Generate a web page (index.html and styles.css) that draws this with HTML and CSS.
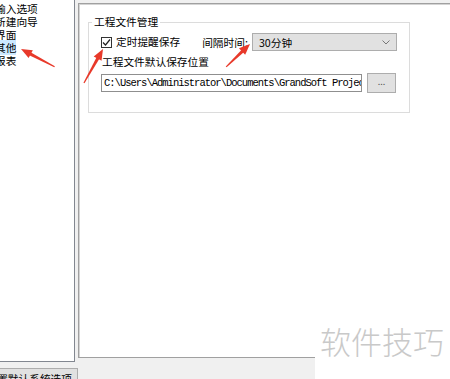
FILE: index.html
```html
<!DOCTYPE html>
<html>

  <head>

    <meta charset="utf-8">

    <title> 选项 </title>

    <link rel="stylesheet" href="styles.css">

  </head>

  <body>
    <!-- Ventana de opciones -->
    <div class="dialog">
      <div class="main">
        <!-- Árbol de categorías -->
        <ul class="tree">
          <li>输入选项</li>
          <li>新建向导</li>
          <li>界面</li>
          <li><span class="selected">其他</span></li>
          <li>报表</li>
        </ul>

        <!-- Página de la categoría "其他" -->
        <div class="page">
          <fieldset class="group">
            <legend>工程文件管理</legend>
            <div class="row">
              <label class="check">
                <span class="box">
                  <svg width="9" height="9" viewBox="0 0 9 9"><polyline points="1,4.5 3.5,7 8,1.5" fill="none" stroke="#222" stroke-width="1.2"/></svg>
                </span>
                定时提醒保存
              </label>
              <span class="interval">间隔时间:</span>
              <div class="combo">
                <span>30分钟</span>
                <svg width="8" height="5" viewBox="0 0 8 5"><polyline points="0.5,0.5 4,4 7.5,0.5" fill="none" stroke="#777" stroke-width="1"/></svg>
              </div>
            </div>
            <div class="caption">工程文件默认保存位置</div>
            <div class="row">
              <div class="path">C:\Users\Administrator\Documents\GrandSoft Projects</div>
              <div class="browse">...</div>
            </div>
          </fieldset>
        </div>
      </div>

      <div class="footer">
        <div class="reset">设置默认系统选项</div>
      </div>
    </div>

    <div class="watermark">软件技巧</div>

    <!-- Flechas rojas de la captura -->
    <svg class="arrows" width="450" height="379">
      <g fill="#e8392a">
        <g transform="translate(21,49) rotate(207.9)">
          <polygon points="-38,-0.6 -9,-1.6 -9,1.6 -38,0.6"/>
          <polygon points="0,0 -11,-4.5 -11,4.5"/>
        </g>
        <g transform="translate(103,49) rotate(-60.8)">
          <polygon points="-39,-0.6 -9,-1.6 -9,1.6 -39,0.6"/>
          <polygon points="0,0 -11,-4.5 -11,4.5"/>
        </g>
        <g transform="translate(250,44) rotate(-43.8)">
          <polygon points="-33,-0.6 -9,-1.6 -9,1.6 -33,0.6"/>
          <polygon points="0,0 -11,-4.5 -11,4.5"/>
        </g>
      </g>
    </svg>

  </body>

</html>
```

FILE: styles.css
```css
body {
  margin: 0;
  width: 450px;
  height: 379px;
  overflow: hidden;
  position: relative;
  background: #f0f0f0;
  font-family: "Noto Sans CJK SC", "Noto Sans", sans-serif;
  font-size: 10.7px;
  color: #000;
}

.main {
  display: flex;
  height: 362px;
}

.tree {
  box-sizing: border-box;
  width: 75px;
  height: 362px;
  margin: 0;
  padding: 2px 0 0 0;
  list-style: none;
  background: #fff;
  border-right: 1px solid #828790;
  border-bottom: 1px solid #828790;
  overflow: hidden;
}

.tree li {
  margin-left: -5px;
  height: 13px;
  line-height: 13px;
  white-space: nowrap;
}

.selected {
  background: #cce8ff;
}

.page {
  flex: 1;
  box-sizing: border-box;
  height: 355px;
  margin: 3px 0 0 3px;
  background: #fff;
  border: 1px solid #a0a0a0;
  border-right: none;
  box-shadow: inset 1px 1px 0 #d4d4d4;
}

.group {
  box-sizing: border-box;
  width: 322px;
  height: 98px;
  margin: 11px 0 0 9px;
  padding: 4px 12px 0 12px;
  border: 1px solid #dcdcdc;
}

.group legend {
  margin-left: -9px;
  padding: 0 2px;
  line-height: 14px;
}

.row {
  display: flex;
  align-items: center;
}

.check {
  display: flex;
  align-items: center;
  gap: 4px;
  line-height: 18px;
}

.box {
  box-sizing: border-box;
  width: 11px;
  height: 11px;
  border: 1px solid #333;
  display: flex;
  align-items: center;
  justify-content: center;
}

.interval {
  margin-left: 22px;
}

.combo {
  box-sizing: border-box;
  width: 145px;
  height: 18px;
  margin-left: 4px;
  padding: 0 6px;
  display: flex;
  align-items: center;
  justify-content: space-between;
  background: #e1e1e1;
  border: 1px solid #adadad;
}

.caption {
  margin-top: 4px;
  padding-left: 1px;
  line-height: 14px;
}

.caption + .row {
  margin-top: 4px;
}

.path {
  box-sizing: border-box;
  width: 261px;
  height: 18px;
  padding-left: 2px;
  border: 1px solid #8f8f8f;
  font-family: "Liberation Mono", monospace;
  font-size: 10.5px;
  letter-spacing: -1px;
  line-height: 16px;
  white-space: nowrap;
  overflow: hidden;
}

.browse {
  box-sizing: border-box;
  width: 29px;
  height: 20px;
  margin-left: 5px;
  background: #e1e1e1;
  border: 1px solid #adadad;
  color: #555;
  text-align: center;
  line-height: 16px;
  font-size: 9px;
}

.footer {
  height: 17px;
  overflow: hidden;
}

.reset {
  box-sizing: border-box;
  width: 80px;
  height: 20px;
  margin: 6px 0 0 -2px;
  padding: 3px 5px 0 0;
  display: flex;
  justify-content: flex-end;
  background: #e1e1e1;
  border: 1px solid #adadad;
  white-space: nowrap;
  overflow: hidden;
  line-height: 14px;
}

.watermark {
  position: absolute;
  left: 315px;
  top: 320px;
  right: 0;
  bottom: 0;
  padding: 5px 0 0 5px;
  background: #fff;
  color: #c9c9c9;
  font-size: 31px;
  font-weight: 300;
  line-height: 31px;
}

.arrows {
  position: absolute;
  left: 0;
  top: 0;
  pointer-events: none;
}
```
